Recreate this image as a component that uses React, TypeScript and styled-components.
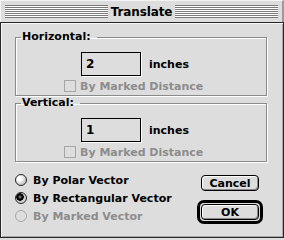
import React, { useState } from "react";
import styled, { createGlobalStyle } from "styled-components";

const GlobalStyle = createGlobalStyle`
  html, body {
    margin: 0;
    padding: 0;
    background: #dddddd;
  }
  * {
    box-sizing: border-box;
  }
`;

const font = `"DejaVu Sans", "Liberation Sans", sans-serif`;

const Window = styled.div`
  width: 284px;
  height: 240px;
  background: #dddddd;
  display: flex;
  flex-direction: column;
  font-family: ${font};
  font-weight: bold;
  font-size: 11px;
  color: #000;
`;

const TitleBar = styled.div`
  height: 22px;
  display: flex;
  align-items: center;
  padding: 0 4px;
  border-top: 1px solid #f4f4f4;
  border-left: 1px solid #f4f4f4;
  border-right: 2px solid #9a9a9a;
`;

const Stripes = styled.div`
  flex: 1;
  height: 13px;
  background: repeating-linear-gradient(
    to bottom,
    #7a7a7a 0 1px,
    #ffffff 1px 2px
  );
`;

const Title = styled.div`
  padding: 0 3px 0 3px;
  font-size: 12px;
  line-height: 14px;
  letter-spacing: -0.1px;
`;

const Body = styled.div`
  flex: 1;
  margin-bottom: 2px;
  border: 1px solid #262626;
  box-shadow: inset 1px 1px 0 #f6f6f6, inset -1px -1px 0 #a8a8a8;
  padding: 7px 16px 0 14px;
  display: flex;
  flex-direction: column;
`;

const Group = styled.fieldset`
  margin: 0;
  padding: 0 0 2px 0;
  border: 1px solid #8a8a8a;
  box-shadow: 1px 1px 0 #ffffff, inset 1px 1px 0 #ffffff;
  min-width: 0;
`;

const Legend = styled.legend`
  margin-left: 5px;
  padding: 0 6px 0 1px;
  line-height: 14px;
  font-size: 11px;
`;

const FieldRow = styled.div`
  display: flex;
  align-items: center;
  gap: 8px;
  margin: 8px 0 0 65px;
`;

const NumberInput = styled.input`
  width: 60px;
  height: 24px;
  border: 1px solid #000;
  background: #dddddd;
  box-shadow: 1px 1px 0 #ffffff;
  font-family: ${font};
  font-weight: bold;
  font-size: 12px;
  padding: 0 4px;
  outline: none;
  color: #000;
`;

const Unit = styled.span`
  font-size: 11px;
`;

const CheckRow = styled.label<{ $disabled?: boolean }>`
  display: flex;
  align-items: center;
  gap: 4px;
  height: 14px;
  margin: 3px 0 0 48px;
  color: ${(p) => (p.$disabled ? "#8c8c8c" : "#000")};
`;

const CheckBox = styled.span<{ $disabled?: boolean }>`
  width: 12px;
  height: 12px;
  border: 1px solid ${(p) => (p.$disabled ? "#a6a6a6" : "#000")};
  background: #dddddd;
`;

const Bottom = styled.div`
  display: flex;
  justify-content: space-between;
  margin-top: 9px;
  padding-right: 4px;
`;

const RadioList = styled.div`
  display: flex;
  flex-direction: column;
`;

const RadioRow = styled.label<{ $disabled?: boolean }>`
  display: flex;
  align-items: center;
  gap: 6px;
  height: 18px;
  color: ${(p) => (p.$disabled ? "#8c8c8c" : "#000")};
  cursor: ${(p) => (p.$disabled ? "default" : "pointer")};
`;

const RadioDot = styled.span<{ $checked?: boolean; $disabled?: boolean }>`
  width: 12px;
  height: 12px;
  border-radius: 50%;
  border: 1px solid ${(p) => (p.$disabled ? "#a8a8a8" : "#262626")};
  background: ${(p) =>
    p.$disabled
      ? "#dddddd"
      : p.$checked
      ? "radial-gradient(circle at 40% 40%, #6a6a6a 0 1px, #000 2px 3.5px, #cfcfcf 4px)"
      : "radial-gradient(circle at 35% 35%, #ffffff 0 2px, #c8c8c8 6px)"};
`;

const Buttons = styled.div`
  display: flex;
  flex-direction: column;
  align-items: center;
  gap: 9px;
  margin-top: 4px;
`;

const Button = styled.button`
  width: 58px;
  height: 16px;
  border: 1px solid #000;
  border-radius: 4px;
  background: #dddddd;
  box-shadow: inset 1px 1px 0 #ffffff, inset -1px -1px 0 #8a8a8a;
  font-family: ${font};
  font-weight: bold;
  font-size: 11px;
  line-height: 13px;
  padding: 0;
  color: #000;
`;

const DefaultRing = styled.div`
  border: 3px solid #000;
  border-radius: 7px;
  padding: 1px;
  display: flex;
`;

type Mode = "polar" | "rect" | "marked";

const modes: { id: Mode; label: string; disabled?: boolean }[] = [
  { id: "polar", label: "By Polar Vector" },
  { id: "rect", label: "By Rectangular Vector" },
  { id: "marked", label: "By Marked Vector", disabled: true },
];

export default function App() {
  const [mode, setMode] = useState<Mode>("rect");
  const [h, setH] = useState("2");
  const [v, setV] = useState("1");

  return (
    <>
      <GlobalStyle />
      <Window>
        <TitleBar>
          <Stripes />
          <Title>Translate</Title>
          <Stripes />
        </TitleBar>
        <Body>
          <Group>
            <Legend>Horizontal:</Legend>
            <FieldRow>
              <NumberInput value={h} onChange={(e) => setH(e.target.value)} />
              <Unit>inches</Unit>
            </FieldRow>
            <CheckRow $disabled>
              <CheckBox $disabled />
              By Marked Distance
            </CheckRow>
          </Group>
          <Group>
            <Legend>Vertical:</Legend>
            <FieldRow>
              <NumberInput value={v} onChange={(e) => setV(e.target.value)} />
              <Unit>inches</Unit>
            </FieldRow>
            <CheckRow $disabled>
              <CheckBox $disabled />
              By Marked Distance
            </CheckRow>
          </Group>
          <Bottom>
            <RadioList>
              {modes.map((m) => (
                <RadioRow
                  key={m.id}
                  $disabled={m.disabled}
                  onClick={() => !m.disabled && setMode(m.id)}
                >
                  <RadioDot $checked={mode === m.id} $disabled={m.disabled} />
                  {m.label}
                </RadioRow>
              ))}
            </RadioList>
            <Buttons>
              <Button>Cancel</Button>
              <DefaultRing>
                <Button>OK</Button>
              </DefaultRing>
            </Buttons>
          </Bottom>
        </Body>
      </Window>
    </>
  );
}
